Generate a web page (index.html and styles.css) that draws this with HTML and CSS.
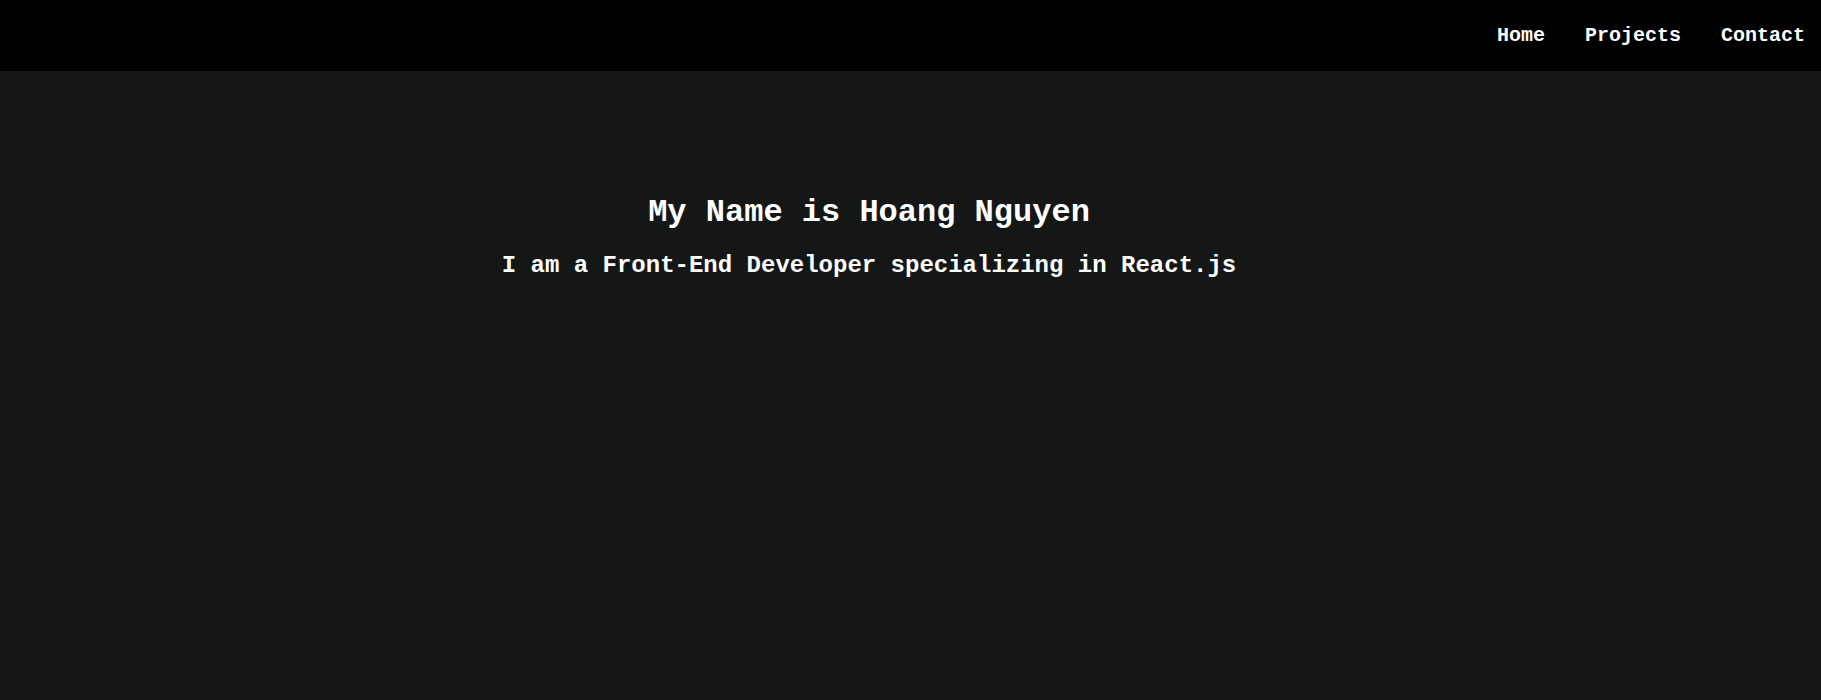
FILE: index.html
```html
<!DOCTYPE html>
<html lang="en">
<head>
<meta charset="utf-8">
<title>Hoang Nguyen</title>
<link rel="stylesheet" href="styles.css">
</head>
<body>
<header class="navbar">
  <nav class="nav-links">
    <a class="nav-link" href="#">Home</a>
    <a class="nav-link" href="#">Projects</a>
    <a class="nav-link" href="#">Contact</a>
  </nav>
</header>
<main class="hero">
  <h1 class="hero-title">My Name is Hoang Nguyen</h1>
  <h2 class="hero-subtitle">I am a Front-End Developer specializing in React.js</h2>
</main>
</body>
</html>
```
FILE: styles.css
```css
html, body {
  margin: 0;
  padding: 0;
  background: #151717;
  min-height: 100%;
}
body {
  font-family: "Liberation Mono", "Courier New", monospace;
  color: #ffffff;
  font-weight: bold;
}
.navbar {
  height: 71px;
  background: #000000;
  display: flex;
  align-items: center;
  justify-content: flex-end;
  padding-right: 16px;
}
.nav-links {
  display: flex;
  gap: 40px;
}
.nav-link {
  color: #ffffff;
  text-decoration: none;
  font-size: 20px;
  font-weight: bold;
}
.hero {
  padding: 123px 83px 0 0;
  text-align: center;
}
.hero-title {
  font-size: 32px;
  margin: 0 0 21px;
}
.hero-subtitle {
  font-size: 24px;
  margin: 0;
}
```
